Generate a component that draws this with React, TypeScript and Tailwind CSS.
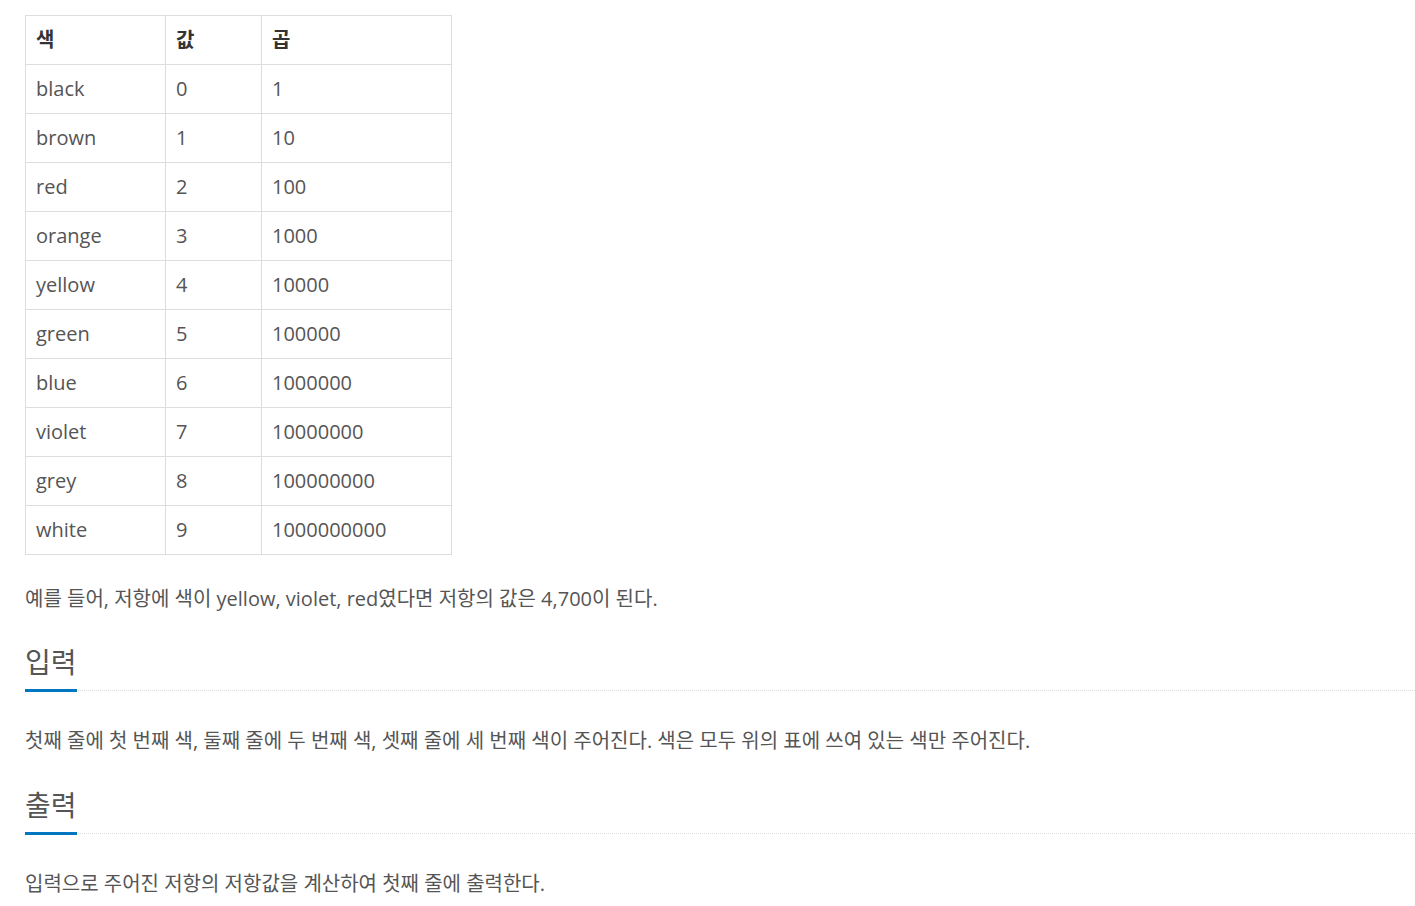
const rows: [string, string, string][] = [
  ["black", "0", "1"],
  ["brown", "1", "10"],
  ["red", "2", "100"],
  ["orange", "3", "1000"],
  ["yellow", "4", "10000"],
  ["green", "5", "100000"],
  ["blue", "6", "1000000"],
  ["violet", "7", "10000000"],
  ["grey", "8", "100000000"],
  ["white", "9", "1000000000"],
];

const Headline = ({ title, className }: { title: string; className: string }) => (
  <h2 className={`${className} border-b border-dotted border-[#ddd] text-[28px] leading-[33px] font-normal text-[#555]`}>
    <span className="relative inline-block pb-[10px] mb-[-2px] border-b-[3px] border-[#0076c0]">
      {title}
    </span>
  </h2>
);

const App = () => {
  return (
    <div
      className="min-h-screen bg-white pl-[25px] pt-[15px] text-[#555] text-[20px]"
      style={{ fontFamily: '"Open Sans", "Noto Sans CJK KR", sans-serif' }}
    >
      {/* color table */}
      <table className="border-collapse">
        <thead>
          <tr>
            <th className="w-[140px] border border-[#ddd] px-[10px] py-2 leading-[32px] text-left font-bold text-[#333]">색</th>
            <th className="w-[96px] border border-[#ddd] px-[10px] py-2 leading-[32px] text-left font-bold text-[#333]">값</th>
            <th className="w-[190px] border border-[#ddd] px-[10px] py-2 leading-[32px] text-left font-bold text-[#333]">곱</th>
          </tr>
        </thead>
        <tbody>
          {rows.map(([color, value, mult]) => (
            <tr key={color}>
              <td className="border border-[#ddd] px-[10px] py-2 leading-[32px]">{color}</td>
              <td className="border border-[#ddd] px-[10px] py-2 leading-[32px]">{value}</td>
              <td className="border border-[#ddd] px-[10px] py-2 leading-[32px]">{mult}</td>
            </tr>
          ))}
        </tbody>
      </table>

      <p className="mt-[30px] leading-[27px]">
        예를 들어, 저항에 색이 yellow, violet, red였다면 저항의 값은 4,700이 된다.
      </p>

      <Headline title="입력" className="mt-[34px]" />
      <p className="mt-[36px] leading-[27px]">
        첫째 줄에 첫 번째 색, 둘째 줄에 두 번째 색, 셋째 줄에 세 번째 색이 주어진다. 색은 모두 위의 표에 쓰여 있는 색만 주어진다.
      </p>

      <Headline title="출력" className="mt-[35px]" />
      <p className="mt-[36px] leading-[27px]">
        입력으로 주어진 저항의 저항값을 계산하여 첫째 줄에 출력한다.
      </p>
    </div>
  );
};

export default App;
